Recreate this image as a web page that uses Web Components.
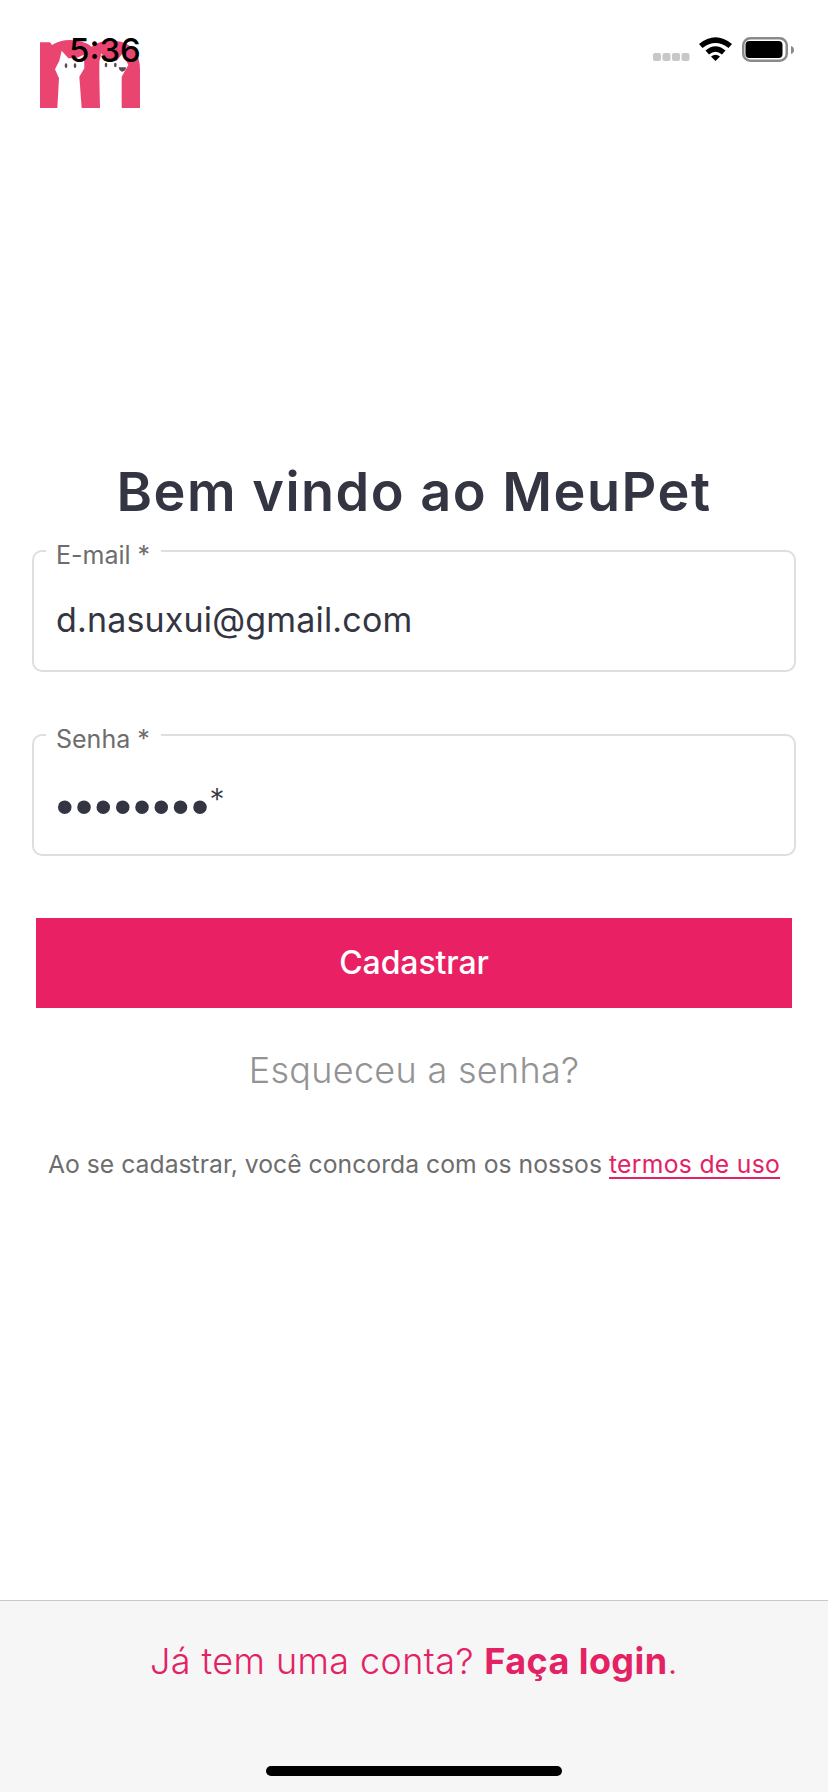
<!DOCTYPE html>
<html><head><meta charset="utf-8"><style>
html,body{margin:0;padding:0;background:#fff}
body{width:828px;height:1792px;font-family:Inter,"Liberation Sans",sans-serif}
</style></head><body>
<mp-app>
<mp-status slot="status"></mp-status>
<mp-title>Bem vindo ao MeuPet</mp-title>
<mp-field label="E-mail *">d.nasuxui@gmail.com</mp-field>
<mp-field label="Senha *" style="margin-top:62px"><span style="font:50px/40px 'Liberation Sans',sans-serif;letter-spacing:1.800px;position:relative;top:3px">••••••••</span><span style="font-size:30px;font-weight:300;position:relative;top:-5px;left:-1px;letter-spacing:0">*</span></mp-field>
<mp-button>Cadastrar</mp-button>
<mp-forgot>Esqueceu a senha?</mp-forgot>
<mp-terms>Ao se cadastrar, você concorda com os nossos <a>termos de uso</a></mp-terms>
<mp-footer slot="footer">Já tem uma conta? <b>Faça login</b>.</mp-footer>
</mp-app>
<script>
function def(name,html){customElements.define(name,class extends HTMLElement{constructor(){super();this.attachShadow({mode:'open'}).innerHTML=typeof html==='function'?html(this):html}})}
def('mp-app',`<style>:host{display:flex;flex-direction:column;width:828px;height:1792px;position:relative;overflow:hidden;background:#fff}
.main{flex:1;display:flex;flex-direction:column;padding:462px 32px 0;box-sizing:border-box}
.logo{position:absolute;left:40px;top:40px}</style>
<svg class="logo" width="100" height="68" viewBox="60 60 300 204"><path fill="#ea4570" d="M60 264V67H90L96 75Q120 60 150 60Q190 60 215 80Q240 60 285 62Q360 70 360 150V264Z"/><path fill="#fff" d="M112 264L117 175L105 148L118 122L125 92L145 115H168L192 104L193 145L178 170L185 264Z"/><path fill="#fff" d="M240 264L238 170V125L244 100L262 122H290L308 100L325 135L305 170L305 264Z"/><g fill="#5f4a50"><ellipse cx="138" cy="137" rx="4" ry="7"/><ellipse cx="165" cy="137" rx="4" ry="7"/><ellipse cx="258" cy="135" rx="4" ry="7"/><ellipse cx="286" cy="135" rx="4" ry="7"/><path d="M296 142H318Q317 155 306 155Q298 153 296 142Z"/></g></svg>
<slot name="status"></slot><div class="main"><slot></slot></div><slot name="footer"></slot>`);
def('mp-status',`<style>:host{display:block;position:absolute;left:0;top:0;width:828px;height:88px}
.t{position:absolute;left:69px;top:30px;font:500 33px/40px Inter,"Liberation Sans",sans-serif;color:#000}
svg{position:absolute;left:650px;top:30px}</style>
<div class="t">5:36</div>
<svg width="150" height="34" viewBox="0 0 150 34">
<g fill="#c8c8c8"><rect x="3" y="23" width="8" height="8" rx="2"/><rect x="12.500" y="23" width="8" height="8" rx="2"/><rect x="22" y="23" width="8" height="8" rx="2"/><rect x="31.500" y="23" width="8" height="8" rx="2"/></g>
<path fill="#000" d="M49 14Q65.500 0.500 82 14L78.500 18Q65.500 8 52.500 18ZM55.500 20.500Q65.500 12 75.500 20.500L72 24.500Q65.500 19 59 24.500ZM61 26.500Q65.500 23 70 26.500L65.500 31Z"/>
<rect x="93.250" y="8.250" width="43.500" height="22.500" rx="7" fill="none" stroke="#8a8a8a" stroke-width="2.500"/><rect x="95.500" y="11" width="37" height="17" rx="4" fill="#000"/><path d="M141 16C143 16.500 144 18 144 20C144 22 143 23.500 141 24Z" fill="#8a8a8a"/></svg>`);
def('mp-title',`<style>:host{display:block;text-align:center;font:600 54px/60px Inter,sans-serif;letter-spacing:1.5px;color:#333542;height:60px;margin-bottom:28px}</style><slot></slot>`);
def('mp-field',el=>`<style>:host{display:block;position:relative;height:122px;box-sizing:border-box;border:2px solid #dedede;border-radius:10px;background:#fff}
.l{position:absolute;left:12px;top:-9px;padding:0 11px 0 10px;background:#fff;font:400 25px/24px Inter,sans-serif;color:#6d6d6d}
.v{padding:18px 22px 0;height:100px;display:flex;align-items:center;font:400 34px/40px Inter,sans-serif;letter-spacing:.17px;color:#333542}</style>
<div class="l">${el.getAttribute('label')}</div><div class="v"><slot></slot></div>`);
def('mp-button',`<style>:host{display:flex;align-items:center;justify-content:center;height:90px;margin:62px 4px 0;background:#e92063;color:#fff;font:500 32px/40px Inter,sans-serif;letter-spacing:-.1px}</style><slot></slot>`);
def('mp-forgot',`<style>:host{display:block;text-align:center;margin-top:40px;font:350 36px/44px Inter,sans-serif;letter-spacing:.3px;color:#939393}</style><slot></slot>`);
def('mp-terms',`<style>:host{display:block;text-align:center;margin-top:56px;font:400 24.700px/32px Inter,sans-serif;letter-spacing:.03px;color:#6d6d6d}::slotted(a){color:#e32264;text-decoration:underline;text-decoration-thickness:2px;text-underline-offset:4px;letter-spacing:.3px}</style><slot></slot>`);
def('mp-footer',`<style>:host{display:block;position:relative;height:192px;box-sizing:border-box;background:#f6f6f7;border-top:1px solid #c9c9c9;padding-top:32px;text-align:center;font:350 36px/56px Inter,sans-serif;letter-spacing:.4px;color:#e32264}
::slotted(b){font-weight:700}
.h{position:absolute;left:266px;bottom:16px;width:296px;height:10px;border-radius:5px;background:#000}</style><slot></slot><div class="h"></div>`);
</script>
</body></html>
